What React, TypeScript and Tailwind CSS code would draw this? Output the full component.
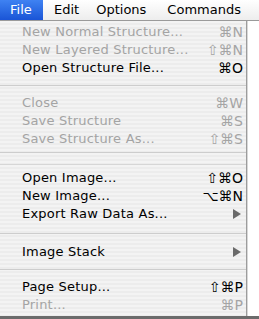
const font = { fontFamily: '"DejaVu Sans", "Liberation Sans", sans-serif' };

type Item =
  | { kind: "item"; label: string; shortcut?: string; disabled?: boolean; sub?: boolean }
  | { kind: "sep"; h: string; double?: boolean };

const items: Item[] = [
  { kind: "item", label: "New Normal Structure...", shortcut: "⌘N", disabled: true },
  { kind: "item", label: "New Layered Structure...", shortcut: "⇧⌘N", disabled: true },
  { kind: "item", label: "Open Structure File...", shortcut: "⌘O" },
  { kind: "sep", h: "h-[17px]" },
  { kind: "item", label: "Close", shortcut: "⌘W", disabled: true },
  { kind: "item", label: "Save Structure", shortcut: "⌘S", disabled: true },
  { kind: "item", label: "Save Structure As...", shortcut: "⇧⌘S", disabled: true },
  { kind: "sep", h: "h-[21px]", double: true },
  { kind: "item", label: "Open Image...", shortcut: "⇧⌘O" },
  { kind: "item", label: "New Image...", shortcut: "⌥⌘N" },
  { kind: "item", label: "Export Raw Data As...", sub: true },
  { kind: "sep", h: "h-[20px]" },
  { kind: "item", label: "Image Stack", sub: true },
  { kind: "sep", h: "h-[17px]" },
  { kind: "item", label: "Page Setup...", shortcut: "⇧⌘P" },
  { kind: "item", label: "Print...", shortcut: "⌘P", disabled: true },
];

const SubArrow = () => (
  <svg width="8" height="10" viewBox="0 0 8 10" className="mr-[2px]">
    <polygon points="0,0 8,5 0,10" fill="#6a6a6a" />
  </svg>
);

export default function App() {
  return (
    <div className="w-[259px] h-[319px] overflow-hidden bg-white" style={font}>
      {/* menu bar */}
      <div className="h-[21px] flex items-center text-[13px] text-black bg-gradient-to-b from-white to-[#ededed] border-b border-[#9a9a9a]">
        <div className="h-full w-[43px] flex items-center pl-[10px] bg-gradient-to-b from-[#3f82f2] to-[#1a54d6] text-white">
          File
        </div>
        <span className="ml-[11px]">Edit</span>
        <span className="ml-[17px]">Options</span>
        <span className="ml-[21px]">Commands</span>
      </div>

      <div className="flex h-[295px]">
        {/* menu panel */}
        <div className="w-[247px] h-full flex flex-col pt-[2px] border-r border-[#9c9c9c] bg-[repeating-linear-gradient(to_bottom,#f3f3f3_0px,#f3f3f3_2px,#ececec_2px,#ececec_4px)] text-[13px]">
          {items.map((it, i) =>
            it.kind === "sep" ? (
              <div key={i} className={`${it.h} flex flex-col justify-center gap-[11px]`}>
                <div className="h-px bg-[#cdcdcd]" />
                {it.double && <div className="h-px bg-[#d6d6d6]" />}
              </div>
            ) : (
              <div
                key={i}
                className={`h-[18px] flex items-center pl-[22px] pr-[3px] ${
                  it.disabled ? "text-[#a4a4a4]" : "text-black"
                }`}
              >
                <span className="flex-1 tracking-[0.2px]">{it.label}</span>
                {it.shortcut && <span className="text-right text-[14px]">{it.shortcut}</span>}
                {it.sub && <SubArrow />}
              </div>
            )
          )}
        </div>
        <div className="flex-1 bg-white border-l border-[#d8d8d8]" />
      </div>
      <div className="h-[3px] bg-[#6b6b6b]" />
    </div>
  );
}
